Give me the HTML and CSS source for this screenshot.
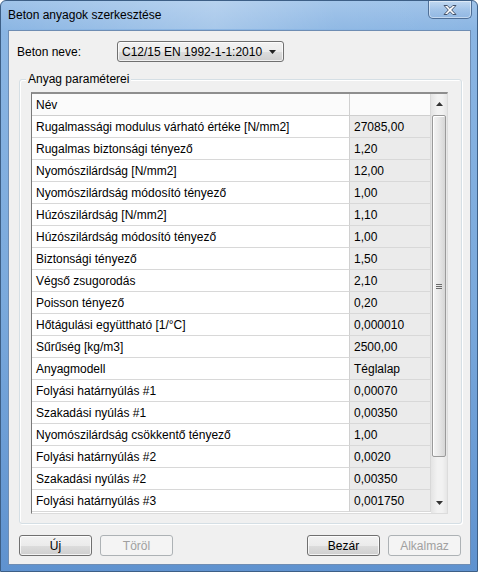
FILE: index.html
```html
<!DOCTYPE html>
<html>
<head>
<meta charset="utf-8">
<link rel="stylesheet" href="styles.css">
</head>
<body>
<div class="window">
  <div class="titlebar">
    <span class="title">Beton anyagok szerkesztése</span>
    <div class="close">
      <svg width="16" height="12" viewBox="0 0 16 12"><path d="M2 1.5h3.2L8 4.3l2.8-2.8H14L9.7 6 14 10.5h-3.2L8 7.7l-2.8 2.8H2L6.3 6z" fill="#fff" stroke="#44536b" stroke-width="1" stroke-linejoin="round"/></svg>
    </div>
  </div>
  <div class="client">
    <div class="row-name">
      <span class="label">Beton neve:</span>
      <div class="combo">
        <span>C12/15 EN 1992-1-1:2010</span>
        <svg class="combo-arrow" width="7" height="4" viewBox="0 0 7 4"><path d="M0 0h7L3.5 4z" fill="#222"/></svg>
      </div>
    </div>
    <div class="group">
      <span class="legend">Anyag paraméterei</span>
      <div class="grid">
        <div class="table">
          <div class="cell head">Név</div><div class="cell head val"></div>
          <div class="cell">Rugalmassági modulus várható értéke [N/mm2]</div><div class="cell val">27085,00</div>
          <div class="cell">Rugalmas biztonsági tényező</div><div class="cell val">1,20</div>
          <div class="cell">Nyomószilárdság [N/mm2]</div><div class="cell val">12,00</div>
          <div class="cell">Nyomószilárdság módosító tényező</div><div class="cell val">1,00</div>
          <div class="cell">Húzószilárdság [N/mm2]</div><div class="cell val">1,10</div>
          <div class="cell">Húzószilárdság módosító tényező</div><div class="cell val">1,00</div>
          <div class="cell">Biztonsági tényező</div><div class="cell val">1,50</div>
          <div class="cell">Végső zsugorodás</div><div class="cell val">2,10</div>
          <div class="cell">Poisson tényező</div><div class="cell val">0,20</div>
          <div class="cell">Hőtágulási együttható [1/°C]</div><div class="cell val">0,000010</div>
          <div class="cell">Sűrűség [kg/m3]</div><div class="cell val">2500,00</div>
          <div class="cell">Anyagmodell</div><div class="cell val">Téglalap</div>
          <div class="cell">Folyási határnyúlás #1</div><div class="cell val">0,00070</div>
          <div class="cell">Szakadási nyúlás #1</div><div class="cell val">0,00350</div>
          <div class="cell">Nyomószilárdság csökkentő tényező</div><div class="cell val">1,00</div>
          <div class="cell">Folyási határnyúlás #2</div><div class="cell val">0,0020</div>
          <div class="cell">Szakadási nyúlás #2</div><div class="cell val">0,00350</div>
          <div class="cell">Folyási határnyúlás #3</div><div class="cell val">0,001750</div>
        </div>
        <div class="scrollbar">
          <div class="sb-btn"><svg width="7" height="4" viewBox="0 0 7 4"><path d="M3.5 0L7 4H0z" fill="#333"/></svg></div>
          <div class="sb-track">
            <div class="thumb"><div class="grip"></div></div>
          </div>
          <div class="sb-btn"><svg width="7" height="4" viewBox="0 0 7 4"><path d="M0 0h7L3.5 4z" fill="#333"/></svg></div>
        </div>
      </div>
    </div>
    <div class="buttons">
      <div class="btn">Új</div>
      <div class="btn disabled">Töröl</div>
      <div class="spacer"></div>
      <div class="btn">Bezár</div>
      <div class="btn disabled">Alkalmaz</div>
    </div>
  </div>
</div>
</body>
</html>
```
FILE: styles.css
```css
html, body {
  margin: 0;
  padding: 0;
}
body {
  width: 478px;
  height: 572px;
  overflow: hidden;
  font-family: "Liberation Sans", Arial, sans-serif;
  font-size: 12px;
  color: #000;
}
.window {
  width: 478px;
  height: 572px;
  box-sizing: border-box;
  border: 1px solid #3d5f86;
  border-radius: 6px 6px 0 0;
  background: linear-gradient(180deg, #9fc3e9 0px, #8ab5e3 30px, #7aa9dc 300px, #5f92cf 572px);
  display: flex;
  flex-direction: column;
  padding: 0 6px 6px 7px;
}
.titlebar {
  height: 28px;
  display: flex;
  align-items: flex-start;
  justify-content: space-between;
  background: linear-gradient(90deg, rgba(255,255,255,0) 0%, rgba(255,255,255,0.25) 45%, rgba(255,255,255,0.05) 70%, rgba(255,255,255,0) 100%);
  margin: 0 -6px 0 -7px;
  padding: 0 5px 0 7px;
}
.title {
  margin-top: 7px;
  font-size: 12px;
  color: #000;
}
.close {
  width: 44px;
  height: 18px;
  box-sizing: border-box;
  border: 1px solid #4f6f97;
  border-top: none;
  border-radius: 0 0 5px 5px;
  background: linear-gradient(180deg, rgba(255,255,255,0.35), rgba(180,205,235,0.35) 50%, rgba(140,175,220,0.3));
  box-shadow: inset 0 0 0 1px rgba(255,255,255,0.45);
  display: flex;
  align-items: center;
  justify-content: center;
}
.client {
  flex: 1;
  box-sizing: border-box;
  background: #f0f0f0;
  border: 1px solid #6f8db3;
  margin-top: 1px;
  display: flex;
  flex-direction: column;
  padding: 10px 0 0 0;
}
.row-name {
  display: flex;
  align-items: center;
  height: 21px;
  padding-left: 8px;
}
.label {
  width: 100px;
}
.combo {
  width: 167px;
  height: 21px;
  box-sizing: border-box;
  border: 1px solid #707070;
  border-radius: 3px;
  background: linear-gradient(180deg, #f2f2f2 0%, #ebebeb 50%, #dddddd 51%, #cfcfcf 100%);
  box-shadow: inset 0 0 0 1px rgba(255,255,255,0.7);
  display: flex;
  align-items: center;
  justify-content: space-between;
  padding: 0 7px 0 4px;
}
.group {
  position: relative;
  margin: 17px 0 0 10px;
  width: 443px;
  height: 445px;
  box-sizing: border-box;
  border: 1px solid #d5dfe5;
  border-radius: 3px;
  box-shadow: inset 1px 1px 0 #fff, 1px 1px 0 #fff;
  padding: 12px 0 0 11px;
}
.legend {
  position: absolute;
  left: 6px;
  top: -8px;
  padding: 0 2px;
  background: #f0f0f0;
  line-height: 14px;
}
.grid {
  width: 417px;
  height: 422px;
  box-sizing: border-box;
  border-top: 2px solid #8e8e8e;
  border-left: 1px solid #7a7a7a;
  border-right: 1px solid #dcdcdc;
  border-bottom: 1px solid #dcdcdc;
  display: flex;
  overflow: hidden;
  background: #fff;
}
.table {
  width: 399px;
  display: grid;
  grid-template-columns: 318px 81px;
  grid-auto-rows: 22px;
  align-content: start;
  overflow: hidden;
}
.cell {
  box-sizing: border-box;
  border-bottom: 1px solid #d8d8d8;
  border-right: 1px solid #d0d0d0;
  padding-left: 4px;
  display: flex;
  align-items: center;
  white-space: nowrap;
  overflow: hidden;
  background: #fff;
}
.cell.val {
  background: #ebebeb;
  border-right: 1px solid #d8d8d8;
  padding-left: 4px;
}
.cell.head {
  background: #fbfbfb;
  border-bottom: 1px solid #cfcfcf;
}
.cell.head.val {
  background: #fbfbfb;
}
.scrollbar {
  width: 16px;
  display: flex;
  flex-direction: column;
  background: linear-gradient(90deg, #e4e4e4, #f2f2f2 40%, #f2f2f2 70%, #e6e6e6);
}
.sb-btn {
  height: 20px;
  display: flex;
  align-items: center;
  justify-content: center;
}
.sb-track {
  flex: 1;
  padding: 1px 1px 36px 1px;
  display: flex;
}
.thumb {
  flex: 1;
  box-sizing: border-box;
  border: 1px solid #9a9a9a;
  border-radius: 2px;
  background: linear-gradient(90deg, #f5f5f5, #e8e8e8 50%, #d6d6d6);
  box-shadow: inset 1px 1px 0 #fff;
  display: flex;
  align-items: center;
  justify-content: center;
}
.grip {
  width: 6px;
  height: 5px;
  background: repeating-linear-gradient(180deg, #6a6a6a 0 1px, transparent 1px 2px);
}
.buttons {
  display: flex;
  margin: 11px 0 0 10px;
  width: 442px;
  gap: 8px;
}
.spacer {
  flex: 1;
}
.btn {
  width: 73px;
  height: 21px;
  box-sizing: border-box;
  border: 1px solid #707070;
  border-radius: 3px;
  background: linear-gradient(180deg, #f2f2f2 0%, #ebebeb 50%, #dddddd 51%, #cfcfcf 100%);
  box-shadow: inset 0 0 0 1px rgba(255,255,255,0.75);
  display: flex;
  align-items: center;
  justify-content: center;
}
.btn.disabled {
  border-color: #adb2b5;
  background: #f4f4f4;
  color: #a0a0a0;
  box-shadow: none;
}
```
